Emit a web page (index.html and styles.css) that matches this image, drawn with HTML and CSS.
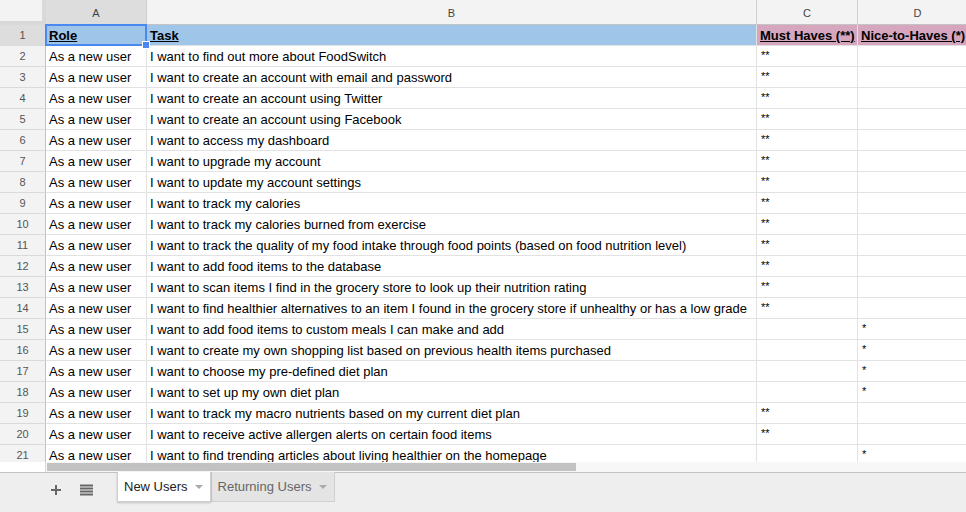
FILE: index.html
```html
<!DOCTYPE html>
<html>
<head>
<meta charset="utf-8">
<link rel="stylesheet" href="styles.css">
</head>
<body>
<div class="app">
  <div class="grid">
    <div class="ch corner"></div><div class="ch sel">A</div><div class="ch">B</div><div class="ch">C</div><div class="ch">D</div>

    <div class="rn sel">1</div><div class="c hb active"><span class="h">Role</span></div><div class="c hb"><span class="h">Task</span></div><div class="c hp"><span class="h">Must Haves (**)</span></div><div class="c hp"><span class="h">Nice-to-Haves (*)</span></div>

    <div class="rn">2</div><div class="c">As a new user</div><div class="c">I want to find out more about FoodSwitch</div><div class="c m">**</div><div class="c m"></div>
    <div class="rn">3</div><div class="c">As a new user</div><div class="c">I want to create an account with email and password</div><div class="c m">**</div><div class="c m"></div>
    <div class="rn">4</div><div class="c">As a new user</div><div class="c">I want to create an account using Twitter</div><div class="c m">**</div><div class="c m"></div>
    <div class="rn">5</div><div class="c">As a new user</div><div class="c">I want to create an account using Facebook</div><div class="c m">**</div><div class="c m"></div>
    <div class="rn">6</div><div class="c">As a new user</div><div class="c">I want to access my dashboard</div><div class="c m">**</div><div class="c m"></div>
    <div class="rn">7</div><div class="c">As a new user</div><div class="c">I want to upgrade my account</div><div class="c m">**</div><div class="c m"></div>
    <div class="rn">8</div><div class="c">As a new user</div><div class="c">I want to update my account settings</div><div class="c m">**</div><div class="c m"></div>
    <div class="rn">9</div><div class="c">As a new user</div><div class="c">I want to track my calories</div><div class="c m">**</div><div class="c m"></div>
    <div class="rn">10</div><div class="c">As a new user</div><div class="c">I want to track my calories burned from exercise</div><div class="c m">**</div><div class="c m"></div>
    <div class="rn">11</div><div class="c">As a new user</div><div class="c">I want to track the quality of my food intake through food points (based on food nutrition level)</div><div class="c m">**</div><div class="c m"></div>
    <div class="rn">12</div><div class="c">As a new user</div><div class="c">I want to add food items to the database</div><div class="c m">**</div><div class="c m"></div>
    <div class="rn">13</div><div class="c">As a new user</div><div class="c">I want to scan items I find in the grocery store to look up their nutrition rating</div><div class="c m">**</div><div class="c m"></div>
    <div class="rn">14</div><div class="c">As a new user</div><div class="c">I want to find healthier alternatives to an item I found in the grocery store if unhealthy or has a low grade</div><div class="c m">**</div><div class="c m"></div>
    <div class="rn">15</div><div class="c">As a new user</div><div class="c">I want to add food items to custom meals I can make and add</div><div class="c m"></div><div class="c m">*</div>
    <div class="rn">16</div><div class="c">As a new user</div><div class="c">I want to create my own shopping list based on previous health items purchased</div><div class="c m"></div><div class="c m">*</div>
    <div class="rn">17</div><div class="c">As a new user</div><div class="c">I want to choose my pre-defined diet plan</div><div class="c m"></div><div class="c m">*</div>
    <div class="rn">18</div><div class="c">As a new user</div><div class="c">I want to set up my own diet plan</div><div class="c m"></div><div class="c m">*</div>
    <div class="rn">19</div><div class="c">As a new user</div><div class="c">I want to track my macro nutrients based on my current diet plan</div><div class="c m">**</div><div class="c m"></div>
    <div class="rn">20</div><div class="c">As a new user</div><div class="c">I want to receive active allergen alerts on certain food items</div><div class="c m">**</div><div class="c m"></div>
    <div class="rn">21</div><div class="c">As a new user</div><div class="c">I want to find trending articles about living healthier on the homepage</div><div class="c m"></div><div class="c m">*</div>
  </div>

  <div class="hscroll">
    <div class="hs-left"></div>
    <div class="hs-track"><div class="hs-thumb"></div></div>
  </div>

  <div class="tabbar">
    <div class="tb-icon">
      <svg width="12" height="12" viewBox="0 0 12 12"><path d="M6 1v10M1 6h10" stroke="#666" stroke-width="2"/></svg>
    </div>
    <div class="tb-icon">
      <svg width="13" height="12" viewBox="0 0 13 12"><path d="M0 1.5h13M0 4.5h13M0 7.5h13M0 10.5h13" stroke="#666" stroke-width="2"/></svg>
    </div>
    <div class="tabs">
      <div class="tab on">New Users <span class="arr"></span></div>
      <div class="tab">Returning Users <span class="arr"></span></div>
    </div>
  </div>
</div>
</body>
</html>
```

FILE: styles.css
```css
* { box-sizing: border-box; }
html, body { margin: 0; padding: 0; background: #fff; }
body { font-family: "Liberation Sans", Arial, sans-serif; overflow: hidden; }
.app { width: 966px; height: 512px; display: flex; flex-direction: column; }

.grid {
  display: grid;
  grid-template-columns: 46px 101px 610px 101px 120px;
  grid-template-rows: 25px repeat(21, 21px);
  height: 462px;
  overflow: hidden;
  flex: none;
}
.ch {
  background: #f3f3f3;
  border-right: 1px solid #cfcfcf;
  border-bottom: 1px solid #c4c4c4;
  font-size: 11px;
  color: #444;
  display: flex;
  align-items: center;
  justify-content: center;
  padding-top: 1px;
}
.ch.sel { background: #dddddd; }
.ch.corner {
  background: #f3f3f3;
  border-right: 4px solid #d9d9d9;
  border-bottom: 4px solid #d9d9d9;
}
.rn {
  background: #f3f3f3;
  border-right: 1px solid #c4c4c4;
  border-bottom: 1px solid #dadada;
  font-size: 11px;
  color: #555;
  display: flex;
  align-items: center;
  justify-content: center;
}
.rn.sel { background: #dddddd; }
.c {
  border-right: 1px solid #e2e2e2;
  border-bottom: 1px solid #e2e2e2;
  font-size: 13px;
  color: #000;
  padding: 0 3px;
  white-space: nowrap;
  display: flex;
  align-items: flex-end;
  padding-bottom: 2px;
  overflow: visible;
}
.c.m { align-items: flex-start; padding-top: 3px; padding-left: 4px; font-size: 11px; }
.hb { background: #9fc5e8; }
.hp { background: #d5a6bd; }
.h { font-weight: bold; text-decoration: underline; }
.active { position: relative; }
.active::before {
  content: "";
  position: absolute;
  left: -1px; top: -1px; right: -1px; bottom: -1px;
  border: 2px solid #4a89f0;
  pointer-events: none;
}
.active::after {
  content: "";
  position: absolute;
  right: -4px; bottom: -4px;
  width: 6px; height: 6px;
  background: #4a89f0;
  border: 1px solid #fff;
  box-sizing: content-box;
  z-index: 2;
}

.hscroll { height: 11px; display: flex; flex: none; border-bottom: 1px solid #c4c4c4; }
.hs-left { width: 46px; background: #fff; border-right: 1px solid #dadada; }
.hs-track { flex: 1; background: #f7f7f7; padding: 1px 0 1px 1px; }
.hs-thumb { width: 529px; height: 8px; background: #c2c2c2; }

.tabbar {
  flex: 1;
  background: #eeeeee;
  display: flex;
  align-items: flex-start;
  padding-left: 40px;
}
.tb-icon { width: 31px; height: 30px; display: flex; align-items: center; justify-content: center; margin-top: 2px; }
.tabs { display: flex; margin-left: 15px; margin-top: -1px; }
.tab {
  height: 30px;
  padding: 0 7px 0 6px;
  font-size: 13px;
  color: #666;
  background: #e4e4e4;
  border: 1px solid #cfcfcf;
  border-top: none;
  display: flex;
  align-items: center;
  padding-bottom: 1px;
}
.tab.on { background: #fff; color: #222; box-shadow: 0 1px 2px rgba(0,0,0,0.2); position: relative; z-index: 1; }
.arr {
  display: inline-block;
  width: 0; height: 0;
  border-left: 4px solid transparent;
  border-right: 4px solid transparent;
  border-top: 4px solid #aaa;
  margin-left: 7px;
  margin-top: 2px;
}
```
